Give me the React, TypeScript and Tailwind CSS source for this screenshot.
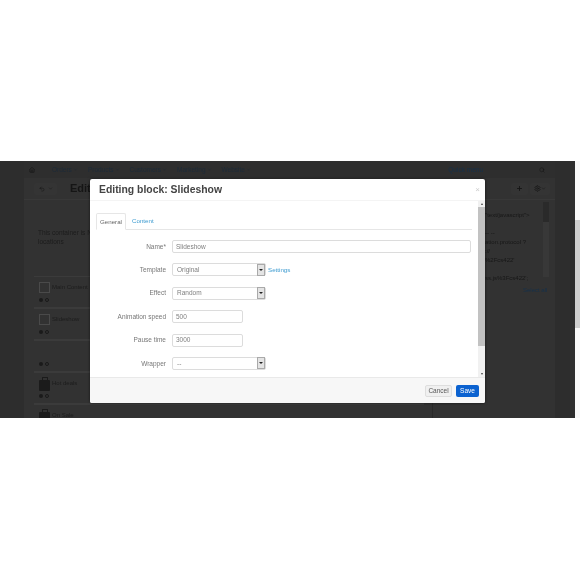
import type {ReactNode} from 'react';
import {ChevronDown, Home, Plus, Search, Settings, Undo2} from 'lucide-react';

const navItems = ['Orders', 'Products', 'Customers', 'Marketing', 'Website'];

const blocks = [
  {name: 'Main Content', icon: 'box'},
  {name: 'Slideshow', icon: 'box'},
  {name: '', icon: 'none'},
  {name: 'Hot deals', icon: 'solid'},
  {name: 'On Sale', icon: 'solid'},
];

function Block({name, icon}: {name: string; icon: string}) {
  return (
    <div className="h-[32px] shrink-0 border-t border-b border-[#3b3b3b] pl-[5px] pt-[3px]">
      <div className="flex h-[15px] items-center gap-[2px]">
        {icon === 'box' && <div className="size-[11px] border border-[#4a4a4a]" />}
        {icon === 'solid' && (
          <div className="flex h-[14px] w-[11px] flex-col items-center">
            <div className="h-[3px] w-[6px] rounded-t-[1px] border border-b-0 border-[#1b1b1b]" />
            <div className="w-full flex-1 rounded-[1px] bg-[#1b1b1b]" />
          </div>
        )}
        <span className="text-[6px] text-[#1c1c1c]">{name}</span>
      </div>
      <div className="mt-[3px] flex items-center gap-[2px]">
        <div className="size-[4px] rounded-full bg-[#1a1a1a]" />
        <div className="size-[4px] rounded-full border border-[#1a1a1a]" />
      </div>
    </div>
  );
}

function SelectField({value, width}: {value: string; width: string}) {
  return (
    <div className={`flex h-[13px] items-center justify-between rounded-[2px] border border-[#dcdcdc] pl-[4px] text-[6.5px] text-[#808080] ${width}`}>
      <span>{value}</span>
      <span className="flex h-[12px] w-[8px] items-center justify-center border border-[#aaa] bg-[#e4e4e4]">
        <span className="border-x-[2px] border-t-[2px] border-x-transparent border-t-[#222]" />
      </span>
    </div>
  );
}

function Row({label, children}: {label: string; children: ReactNode}) {
  return (
    <div className="flex h-[13px] items-center">
      <span className="w-[76px] pr-[6px] text-right text-[6.5px] text-[#777]">{label}</span>
      {children}
    </div>
  );
}

function TextField({value, width}: {value: string; width: string}) {
  return (
    <div className={`flex h-[13px] items-center rounded-[2px] border border-[#dcdcdc] pl-[3px] text-[6.5px] text-[#808080] ${width}`}>
      {value}
    </div>
  );
}

export default function App() {
  return (
    <div className="h-[580px] w-[580px] overflow-hidden bg-white pt-[161px] font-['Liberation_Sans',sans-serif]">
      <div className="relative flex h-[257px]">
        {/* dimmed page behind the dialog */}
        <div className="flex w-[575px] bg-[#323232] blur-[0.5px]">
          <div className="w-[24px] shrink-0 bg-[#2d2d2d]" />
          <div className="flex w-[531px] shrink-0 flex-col">
            <div className="flex h-[17px] shrink-0 items-center justify-between bg-[#2e2e2e] pl-[5px] pr-[10px] text-[6.5px] text-[#1c2a38]">
              <div className="flex items-center gap-[8px]">
                <Home size={6} className="mr-[7px] text-[#151515]" />
                {navItems.map(item => (
                  <span key={item} className="flex items-center gap-[1px] pl-[2px]">
                    {item}
                    <ChevronDown size={5} />
                  </span>
                ))}
              </div>
              <div className="flex items-center gap-[56px]">
                <span className="text-[#15304a]">Quick menu</span>
                <Search size={6} className="text-[#151515]" />
              </div>
            </div>
            <div className="flex h-[22px] shrink-0 items-center justify-between border-b border-[#383838] pl-[10px] pr-[5px]">
              <div className="flex items-center">
                <div className="flex h-[12px] w-[23px] items-center justify-center gap-[3px] rounded-[2px] bg-[#343434]">
                  <Undo2 size={6} className="text-[#151515]" />
                  <ChevronDown size={5} className="text-[#151515]" />
                </div>
                <span className="ml-[13px] text-[11px] font-bold text-[#151515]">Edit</span>
              </div>
              <div className="flex items-center gap-[2px]">
                <div className="flex h-[12px] w-[17px] items-center justify-center rounded-[2px] bg-[#343434]">
                  <Plus size={7} strokeWidth={3} className="text-[#151515]" />
                </div>
                <div className="flex h-[12px] w-[20px] items-center justify-center rounded-[2px] bg-[#343434]">
                  <Settings size={7} className="text-[#151515]" />
                  <ChevronDown size={5} className="text-[#151515]" />
                </div>
              </div>
            </div>
            <div className="flex flex-1 overflow-hidden">
              <div className="flex w-[409px] shrink-0 flex-col border-r border-[#292929] pl-[10px] pr-[8px]">
                <p className="mt-[28px] h-[48px] shrink-0 pl-[4px] text-[6.5px] leading-[9px] text-[#1c1c1c]">
                  This container is NOT
                  <br />
                  locations
                </p>
                {blocks.map((block, i) => (
                  <Block key={i} name={block.name} icon={block.icon} />
                ))}
              </div>
              <div className="flex-1 pl-[52px] pr-[6px] pt-[2px]">
                <div className="flex h-[75px]">
                  <div className="flex-1 whitespace-nowrap pt-[9px] text-[6px] leading-[9px] text-[#171717]">
                    "text/javascript"&gt;
                    <br />
                    <br />
                    -- --
                    <br />
                    ation.protocol ?
                    <br />
                    ://
                    <br />
                    %2Fcs422'
                    <br />
                    <br />
                    ss.js%3Fcs422';
                  </div>
                  <div className="w-[6px] shrink-0 bg-[#383838]">
                    <div className="h-[20px] bg-[#2a2a2a]" />
                  </div>
                </div>
                <div className="mt-[9px] pl-[38px] text-[6px] text-[#15304a]">Select all</div>
              </div>
            </div>
          </div>
          <div className="flex-1 bg-[#2d2d2d]" />
        </div>
        <div className="w-[5px] shrink-0 bg-[#f8f8f8]">
          <div className="mt-[59px] h-[108px] bg-[#cfcfcf]" />
        </div>

        {/* dialog */}
        <div className="absolute left-[90px] top-[18px] flex h-[224px] w-[395px] flex-col rounded-[2px] bg-white shadow-[0_0_3px_rgba(0,0,0,0.6)] blur-[0.25px]">
          <div className="flex h-[22px] shrink-0 items-center justify-between border-b border-[#f4f4f4] pl-[9px] pr-[5px]">
            <span className="text-[10.4px] font-bold text-[#444]">Editing block: Slideshow</span>
            <span className="text-[8px] leading-none text-[#ccc]">×</span>
          </div>
          <div className="flex min-h-0 flex-1">
            <div className="flex-1 pl-[6px] pr-[6px] pt-[12px]">
              <div className="flex h-[17px] items-end border-b border-[#e6e6e6] text-[6.2px]">
                <div className="-mb-px flex h-[17px] w-[30px] items-center justify-center rounded-t-[2px] border border-b-white border-[#e6e6e6] text-[#666]">
                  General
                </div>
                <div className="flex h-[16px] items-center pl-[6px] text-[#3d9bd0]">Content</div>
              </div>
              <div className="mt-[10px] flex flex-col gap-[10.4px]">
                <Row label="Name*">
                  <TextField value="Slideshow" width="w-[299px]" />
                </Row>
                <Row label="Template">
                  <SelectField value="Original" width="w-[94px]" />
                  <span className="pl-[2px] text-[6.2px] text-[#3d9bd0]">Settings</span>
                </Row>
                <Row label="Effect">
                  <SelectField value="Random" width="w-[94px]" />
                </Row>
                <Row label="Animation speed">
                  <TextField value="500" width="w-[71px]" />
                </Row>
                <Row label="Pause time">
                  <TextField value="3000" width="w-[71px]" />
                </Row>
                <Row label="Wrapper">
                  <SelectField value="--" width="w-[94px]" />
                </Row>
              </div>
            </div>
            <div className="flex w-[7px] shrink-0 flex-col bg-[#f1f1f1]">
              <div className="h-[6px] text-center text-[4px] leading-[6px] text-[#444]">▴</div>
              <div className="h-[139px] bg-[#c2c2c2]" />
              <div className="mt-auto h-[6px] text-center text-[4px] leading-[6px] text-[#444]">▾</div>
            </div>
          </div>
          <div className="flex h-[26px] shrink-0 items-center justify-end gap-[4px] rounded-b-[2px] border-t border-[#e9e9e9] bg-[#f7f7f7] pr-[6px]">
            <div className="flex h-[12px] w-[27px] items-center justify-center rounded-[2px] border border-[#dedede] bg-[#f0f0f0] text-[6.5px] text-[#555]">
              Cancel
            </div>
            <div className="flex h-[12px] w-[23px] items-center justify-center rounded-[2px] bg-[#0b62d0] text-[6.5px] text-white">
              Save
            </div>
          </div>
        </div>
      </div>
    </div>
  );
}
